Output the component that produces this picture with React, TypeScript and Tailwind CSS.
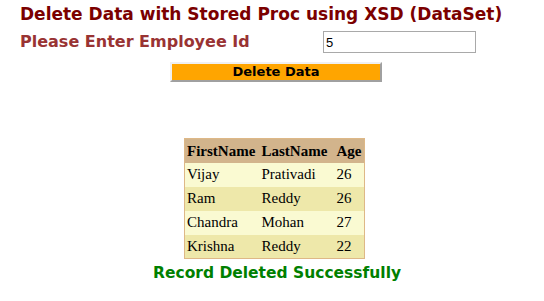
import React from "react";

const rows = [
  ["Vijay", "Prativadi", "26"],
  ["Ram", "Reddy", "26"],
  ["Chandra", "Mohan", "27"],
  ["Krishna", "Reddy", "22"],
];

export default function App() {
  return (
    <div className="w-[544px] h-[301px] bg-white overflow-hidden" style={{ fontFamily: "Verdana, 'DejaVu Sans', sans-serif" }}>
      <div className="pl-[20px] pt-[3px] text-[17px] leading-[22px] font-bold text-[#7b0000]">
        Delete Data with Stored Proc using XSD (DataSet)
      </div>
      <div className="flex items-center h-[24px] mt-[5px]">
        <div className="pl-[20px] w-[323px] text-[16px] font-bold text-[#993333]">Please Enter Employee Id</div>
        <input
          defaultValue="5"
          className="w-[153px] h-[22px] border border-[#a9a9a9] px-[2px] text-[13px] outline-none"
          style={{ fontFamily: "'Liberation Sans', Arial, sans-serif" }}
        />
      </div>
      <div className="flex mt-[8px] pl-[170px]">
        <button className="w-[212px] h-[20px] bg-[#ffa500] border-2 border-t-[#f0f0f0] border-l-[#f0f0f0] border-b-[#a0a0a0] border-r-[#a0a0a0] text-[13px] font-bold text-black leading-[16px]">
          Delete Data
        </button>
      </div>
      <div className="flex pl-[184px] mt-[56px]">
        <table className="border border-[#deb887] border-collapse text-[15px] text-black" style={{ fontFamily: "'Liberation Serif', 'Times New Roman', serif" }}>
          <thead>
            <tr className="bg-[#d2b48c] h-[24px]">
              <th className="w-[75px] px-[2px] text-left font-bold">FirstName</th>
              <th className="w-[75px] px-[2px] text-left font-bold">LastName</th>
              <th className="w-[30px] px-[2px] text-left font-bold">Age</th>
            </tr>
          </thead>
          <tbody>
            {rows.map((r, i) => (
              <tr key={i} className={`h-[24px] ${i % 2 === 0 ? "bg-[#fafad2]" : "bg-[#eee8aa]"}`}>
                <td className="px-[2px]">{r[0]}</td>
                <td className="px-[2px]">{r[1]}</td>
                <td className="px-[2px]">{r[2]}</td>
              </tr>
            ))}
          </tbody>
        </table>
      </div>
      <div className="pl-[153px] mt-[4px] text-[15.5px] leading-[20px] font-bold text-[#008000]">Record Deleted Successfully</div>
    </div>
  );
}
